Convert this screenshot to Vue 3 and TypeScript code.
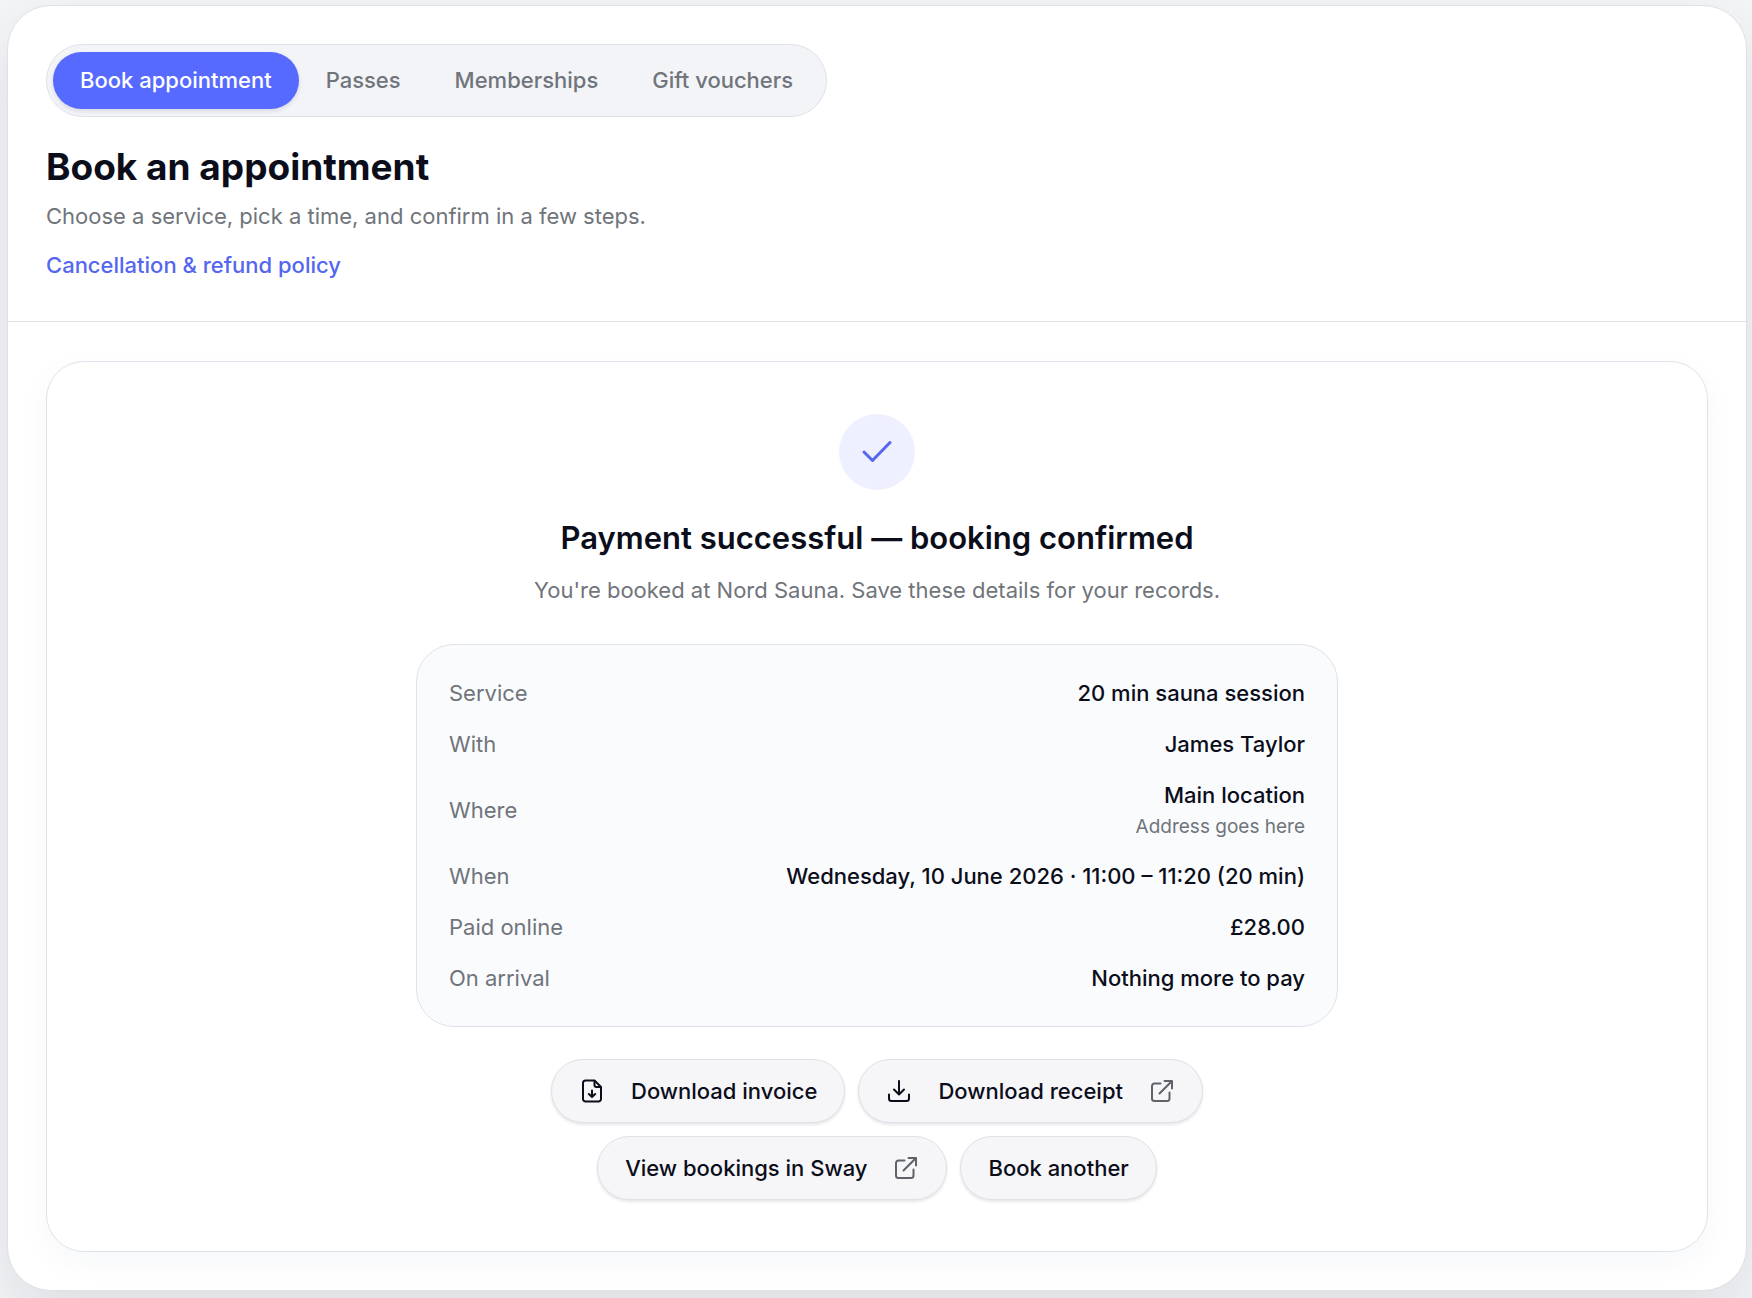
<script setup lang="ts">
import { ref } from 'vue'

interface DetailRow {
  label: string
  value: string
  note?: string
}

interface Action {
  label: string
  icon?: 'invoice' | 'download'
  external?: boolean
}

const tabs: string[] = ['Book appointment', 'Passes', 'Memberships', 'Gift vouchers']
const activeTab = ref<string>(tabs[0])

const details: DetailRow[] = [
  { label: 'Service', value: '20 min sauna session' },
  { label: 'With', value: 'James Taylor' },
  { label: 'Where', value: 'Main location', note: 'Address goes here' },
  { label: 'When', value: 'Wednesday, 10 June 2026 · 11:00 – 11:20 (20 min)' },
  { label: 'Paid online', value: '£28.00' },
  { label: 'On arrival', value: 'Nothing more to pay' },
]

const actions: Action[] = [
  { label: 'Download invoice', icon: 'invoice' },
  { label: 'Download receipt', icon: 'download', external: true },
  { label: 'View bookings in Sway', external: true },
  { label: 'Book another' },
]
</script>

<template>
  <main class="page">
    <div class="shell">
      <header class="header">
        <nav class="tabs" aria-label="Booking sections">
          <button
            v-for="tab in tabs"
            :key="tab"
            type="button"
            class="tab"
            :class="{ active: tab === activeTab }"
            @click="activeTab = tab"
          >{{ tab }}</button>
        </nav>
        <h1 class="title">Book an appointment</h1>
        <p class="lead">Choose a service, pick a time, and confirm in a few steps.</p>
        <a class="policy" href="#policy">Cancellation &amp; refund policy</a>
      </header>

      <div class="body">
        <section class="confirmation">
          <div class="badge">
            <svg class="check" viewBox="0 0 38 38" aria-hidden="true">
              <path d="M6 19 14.500 27.500 32 9.500" />
            </svg>
          </div>
          <h2 class="heading">Payment successful — booking confirmed</h2>
          <p class="sub">You're booked at Nord Sauna. Save these details for your records.</p>

          <dl class="details">
            <div v-for="row in details" :key="row.label" class="row">
              <dt>{{ row.label }}</dt>
              <dd>
                {{ row.value }}
                <span v-if="row.note" class="note">{{ row.note }}</span>
              </dd>
            </div>
          </dl>

          <div class="actions">
            <button v-for="action in actions" :key="action.label" type="button" class="action">
              <svg v-if="action.icon === 'invoice'" class="icon" viewBox="0 0 26 26" aria-hidden="true">
                <path d="M15.500 2.500H6.500A2.500 2.500 0 0 0 4 5V21A2.500 2.500 0 0 0 6.500 23.500H19.500A2.500 2.500 0 0 0 22 21V9Z" />
                <path d="M15.500 3V7A2 2 0 0 0 17.500 9H21.500" />
                <path d="M13 12.500V18.500M9.800 16 13 19 16.200 16" />
              </svg>
              <svg v-else-if="action.icon === 'download'" class="icon" viewBox="0 0 26 26" aria-hidden="true">
                <path d="M13 3V16M8 11.500 13 16.500 18 11.500" />
                <path d="M3 16.500V20.500A2.500 2.500 0 0 0 5.500 23H20.500A2.500 2.500 0 0 0 23 20.500V16.500" />
              </svg>
              <span>{{ action.label }}</span>
              <svg v-if="action.external" class="icon muted" viewBox="0 0 26 26" aria-hidden="true">
                <path d="M11.500 5.500H5.500A2.500 2.500 0 0 0 3 8V20.500A2.500 2.500 0 0 0 5.500 23H18A2.500 2.500 0 0 0 20.500 20.500V14.500" />
                <path d="M10.500 15.500 23 3M15.500 3H23V10.500" />
              </svg>
            </button>
          </div>
        </section>
      </div>
    </div>
  </main>
</template>

<style>
body {
  margin: 0;
  background: #f4f5f6;
}
</style>

<style scoped>
.page {
  padding: 5px 5px 9px 7px;
  overflow: hidden;
  font-family: Inter, "Liberation Sans", sans-serif;
  font-size: 22px;
  line-height: 32px;
  color: #0b0e1a;
}

.shell {
  border: 1px solid #dfe1e7;
  border-radius: 44px;
  background: #fff;
  box-shadow: 0 24px 64px rgba(15, 23, 60, 0.1);
}

.header {
  display: flex;
  flex-direction: column;
  align-items: flex-start;
  padding: 38px 38px 40px;
  border-bottom: 1px solid #dfe1e7;
}

.tabs {
  display: flex;
  padding: 7px 6px;
  border: 1px solid #dfe2e8;
  border-radius: 40px;
  background: #f3f4f8;
}

.tab {
  padding: 12px 27px;
  border: 0;
  border-radius: 32px;
  background: transparent;
  color: #70747b;
  font: inherit;
  font-weight: 500;
  line-height: 33px;
  cursor: pointer;
}

.tab.active {
  background: #566aff;
  color: #fff;
  box-shadow: 0 2px 4px rgba(15, 23, 60, 0.12);
}

.title {
  margin: 28px 0 0;
  font-size: 37px;
  font-weight: 700;
  line-height: 44px;
}

.lead {
  margin: 11px 0 0;
  color: #70747b;
}

.policy {
  margin-top: 17px;
  color: #5566f0;
  font-weight: 500;
  text-decoration: none;
}

.body {
  padding: 39px 38px 38px;
}

.confirmation {
  display: flex;
  flex-direction: column;
  align-items: center;
  padding: 52px 51px 51px;
  border: 1px solid #dfe2ea;
  border-radius: 38px;
  box-shadow: 0 10px 32px rgba(30, 41, 90, 0.04);
}

.badge {
  display: flex;
  align-items: center;
  justify-content: center;
  width: 76px;
  height: 76px;
  border-radius: 50%;
  background: #eeefff;
  color: #5566f0;
}

.check {
  width: 38px;
  height: 38px;
  fill: none;
  stroke: currentColor;
  stroke-width: 3;
  stroke-linecap: round;
  stroke-linejoin: round;
}

.heading {
  margin: 26px 0 0;
  font-size: 31px;
  font-weight: 600;
  line-height: 44px;
}

.sub {
  margin: 14px 0 0;
  color: #70747b;
}

.details {
  box-sizing: border-box;
  width: 100%;
  max-width: 922px;
  margin: 38px 0 0;
  padding: 32px;
  display: flex;
  flex-direction: column;
  gap: 19px;
  border: 1px solid #dfe2e8;
  border-radius: 38px;
  background: #fafbfd;
}

.row {
  display: flex;
  align-items: center;
  justify-content: space-between;
  gap: 26px;
}

dt {
  color: #70747b;
}

dd {
  margin: 0;
  font-weight: 500;
  text-align: right;
}

.note {
  display: block;
  margin-top: 2px;
  color: #70747b;
  font-size: 19px;
  font-weight: 400;
  line-height: 28px;
}

.actions {
  display: flex;
  flex-wrap: wrap;
  justify-content: center;
  gap: 13px;
  max-width: 922px;
  margin-top: 32px;
}

.action {
  display: flex;
  align-items: center;
  gap: 26px;
  padding: 15px 27px;
  border: 1px solid #dfe1e6;
  border-radius: 32px;
  background: #f6f6f9;
  color: #0b0e1a;
  font: inherit;
  font-weight: 500;
  box-shadow: 0 2px 3px rgba(15, 23, 42, 0.1);
  cursor: pointer;
}

.icon {
  width: 26px;
  height: 26px;
  fill: none;
  stroke: currentColor;
  stroke-width: 2;
  stroke-linecap: round;
  stroke-linejoin: round;
}

.muted {
  color: #5f6269;
}
</style>
